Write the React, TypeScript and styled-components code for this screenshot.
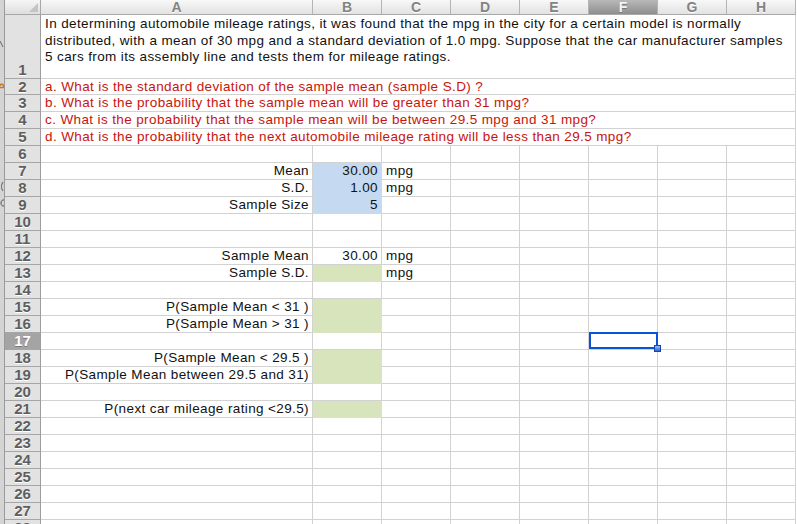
import React from "react";
import styled, { createGlobalStyle, css } from "styled-components";

type Fill = "blue" | "green" | undefined;

interface RowData {
  n: number;
  a?: string;
  b?: string;
  c?: string;
  fill?: Fill;
  selected?: boolean;
}

const GlobalStyle = createGlobalStyle`
  html, body {
    margin: 0;
    padding: 0;
    background: #ffffff;
    overflow: hidden;
  }
  body {
    font-family: "Liberation Sans", Arial, sans-serif;
  }
`;

const fills = {
  blue: "#c5d9f1",
  green: "#d8e4bc",
};

const columns = ["A", "B", "C", "D", "E", "F", "G", "H"];

const questions = [
  "a. What is the standard deviation of the sample mean (sample S.D) ?",
  "b. What is the probability that the sample mean will be greater than 31 mpg?",
  "c. What is the probability that the sample mean will be between 29.5 mpg and 31 mpg?",
  "d. What is the probability that the next automobile mileage rating will be less than 29.5 mpg?",
];

const rows: RowData[] = [
  { n: 6 },
  { n: 7, a: "Mean", b: "30.00", c: "mpg", fill: "blue" },
  { n: 8, a: "S.D.", b: "1.00", c: "mpg", fill: "blue" },
  { n: 9, a: "Sample Size", b: "5", fill: "blue" },
  { n: 10 },
  { n: 11 },
  { n: 12, a: "Sample Mean", b: "30.00", c: "mpg" },
  { n: 13, a: "Sample S.D.", c: "mpg", fill: "green" },
  { n: 14 },
  { n: 15, a: "P(Sample Mean < 31 )", fill: "green" },
  { n: 16, a: "P(Sample Mean > 31 )", fill: "green" },
  { n: 17, selected: true },
  { n: 18, a: "P(Sample Mean < 29.5 )", fill: "green" },
  { n: 19, a: "P(Sample Mean between 29.5 and 31)", fill: "green" },
  { n: 20 },
  { n: 21, a: "P(next car mileage rating <29.5)", fill: "green" },
  { n: 22 },
  { n: 23 },
  { n: 24 },
  { n: 25 },
  { n: 26 },
  { n: 27 },
  { n: 28 },
];

const Page = styled.div`
  display: flex;
  width: 797px;
  height: 524px;
  overflow: hidden;
`;

// sliver of the window lying behind the workbook
const BackWindow = styled.div`
  position: relative;
  flex: 0 0 5px;
  background: #d4d4d4;
  border-right: 1px solid #9a9a9a;
  box-sizing: border-box;
  overflow: hidden;
`;

const Scrap = styled.svg<{ $top: number }>`
  position: absolute;
  left: 0;
  top: ${(p) => p.$top}px;
`;

const Sheet = styled.div`
  display: grid;
  grid-template-columns: 36px 272px 69px 69px 69px 69px 69px 69px 69px;
  grid-template-rows: 15px 64px 16px repeat(26, 17px);
  flex: 0 0 auto;
`;

const Corner = styled.div`
  position: relative;
  background: linear-gradient(#f6f6f6, #dedede);
  border-right: 1px solid #a8a8a8;
  border-bottom: 1px solid #a8a8a8;
  box-sizing: border-box;

  &::after {
    content: "";
    position: absolute;
    right: 2px;
    bottom: 2px;
    width: 0;
    height: 0;
    border-left: 9px solid transparent;
    border-bottom: 9px solid #c4c4c4;
  }
`;

const ColHeader = styled.div<{ $active?: boolean }>`
  display: flex;
  align-items: center;
  justify-content: center;
  box-sizing: border-box;
  border-right: 1px solid #b4b4b4;
  border-bottom: 1px solid #a8a8a8;
  font-size: 14px;
  font-weight: bold;
  line-height: 14px;
  color: #838383;
  background: linear-gradient(#f8f8f8, #e2e2e2);
  text-shadow: 0 1px 0 #ffffff;

  ${(p) =>
    p.$active &&
    css`
      background: linear-gradient(#b8b8b8, #8e8e8e);
      color: #f4f4f4;
      text-shadow: 0 1px 0 #777;
    `}
`;

const RowHeader = styled.div<{ $active?: boolean; $tall?: boolean }>`
  display: flex;
  align-items: ${(p) => (p.$tall ? "flex-end" : "center")};
  justify-content: center;
  box-sizing: border-box;
  border-right: 1px solid #9c9c9c;
  border-bottom: 1px solid #a6a6a6;
  background: #e2e2e2;
  font-size: 15px;
  font-weight: bold;
  line-height: 16px;
  color: #5e5e5e;
  text-shadow: 0 1px 0 #ffffff;

  ${(p) =>
    p.$active &&
    css`
      background: #a4a4a4;
      color: #ffffff;
      text-shadow: 0 1px 0 #777;
    `}
`;

const Cell = styled.div<{ $align?: "left" | "right"; $fill?: Fill }>`
  position: relative;
  box-sizing: border-box;
  border-right: 1px solid ${(p) => (p.$fill ? fills[p.$fill] : "#d2d2d2")};
  border-bottom: 1px solid ${(p) => (p.$fill ? fills[p.$fill] : "#d2d2d2")};
  background: ${(p) => (p.$fill ? fills[p.$fill] : "#ffffff")};
  padding: 0 3px 0 4px;
  font-size: 13.5px;
  letter-spacing: 0.38px;
  line-height: 16px;
  color: #111;
  text-align: ${(p) => p.$align ?? "left"};
  white-space: nowrap;
`;

const Wide = styled.div<{ $red?: boolean }>`
  grid-column: 2 / span 8;
  box-sizing: border-box;
  border-bottom: 1px solid #d2d2d2;
  border-right: 1px solid #d2d2d2;
  padding: 0 0 0 4px;
  font-size: 13.5px;
  letter-spacing: 0.38px;
  line-height: 16px;
  white-space: nowrap;
  overflow: hidden;
  color: ${(p) => (p.$red ? "#c8140c" : "#111")};
`;

const Intro = styled(Wide)`
  padding-top: 1px;
  line-height: 16.7px;
`;

const Selection = styled.div`
  position: absolute;
  z-index: 2;
  inset: -1px -1px 0 0;
  border: 2px solid #0b52d6;
  pointer-events: none;

  &::after {
    content: "";
    position: absolute;
    right: -5px;
    bottom: -5px;
    width: 5px;
    height: 5px;
    background: linear-gradient(#9cc0f6, #2a62d8);
    border: 1px solid #1645b0;
  }
`;

export default function App() {
  return (
    <>
      <GlobalStyle />
      <Page>
        <BackWindow>
          <Scrap $top={40} width="5" height="8" viewBox="0 0 5 8">
            <path d="M0 1 L3 7" stroke="#666" strokeWidth="1" fill="none" />
          </Scrap>
          <Scrap $top={83} width="5" height="9" viewBox="0 0 5 9">
            <path d="M0 4.5 H4 M4 4.5 C4 1 0 0 0 3" stroke="#d0761a" strokeWidth="1.6" fill="none" />
          </Scrap>
          <Scrap $top={182} width="5" height="9" viewBox="0 0 5 9">
            <path d="M3 0 C1 3 1 6 3 9" stroke="#555" strokeWidth="1" fill="none" />
          </Scrap>
          <Scrap $top={199} width="5" height="8" viewBox="0 0 5 8">
            <path d="M4 1 C0 0 0 8 4 7" stroke="#555" strokeWidth="1" fill="none" />
          </Scrap>
        </BackWindow>
        <Sheet>
          <Corner />
          {columns.map((c) => (
            <ColHeader key={c} $active={c === "F"}>
              {c}
            </ColHeader>
          ))}

          <RowHeader $tall>1</RowHeader>
          <Intro>
            In determining automobile mileage ratings, it was found that the mpg in the city for a certain model is normally
            <br />
            distributed, with a mean of 30 mpg and a standard deviation of 1.0 mpg. Suppose that the car manufacturer samples
            <br />5 cars from its assembly line and tests them for mileage ratings.
          </Intro>

          {questions.map((q, i) => (
            <React.Fragment key={q}>
              <RowHeader>{i + 2}</RowHeader>
              <Wide $red>{q}</Wide>
            </React.Fragment>
          ))}

          {rows.map((r) => (
            <React.Fragment key={r.n}>
              <RowHeader $active={r.selected}>{r.n}</RowHeader>
              <Cell $align="right">{r.a}</Cell>
              <Cell $align="right" $fill={r.fill}>
                {r.b}
              </Cell>
              <Cell>{r.c}</Cell>
              <Cell />
              <Cell />
              <Cell>{r.selected && <Selection />}</Cell>
              <Cell />
              <Cell />
            </React.Fragment>
          ))}
        </Sheet>
      </Page>
    </>
  );
}
